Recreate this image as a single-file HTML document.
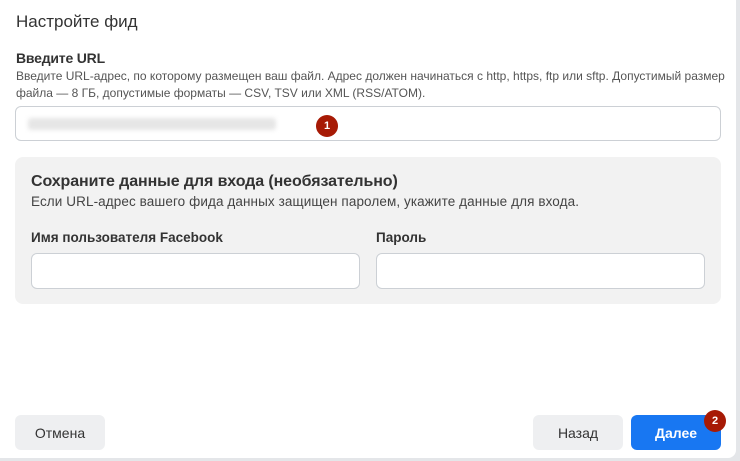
<!DOCTYPE html>
<html><head><meta charset="utf-8"><style>
body{margin:0;width:740px;height:461px;background:#e4e6e9;font-family:"Liberation Sans",sans-serif;color:#1c1e21;position:relative;overflow:hidden}
.card{position:absolute;left:0;top:0;width:736px;height:458px;background:#fff;border-bottom-right-radius:8px}
.a{position:absolute;white-space:nowrap}
.inp{position:absolute;background:#fff;border:1px solid #ccd0d5;border-radius:6px;box-sizing:border-box}
.btn{position:absolute;border-radius:6px;font-size:14px;display:flex;align-items:center;justify-content:center;height:35px;top:415px}
.badge{position:absolute;width:22px;height:22px;border-radius:50%;background:#a71a05;color:#fff;font-size:11px;font-weight:bold;display:flex;align-items:center;justify-content:center}
</style></head><body><div class="card">
<div class="a" style="left:16px;top:12px;font-size:17px;color:#333">Настройте фид</div>
<div class="a" style="left:16px;top:50px;font-size:14px;font-weight:bold;color:#333;letter-spacing:-0.2px">Введите URL</div>
<div class="a" style="left:16px;top:68px;font-size:12px;color:#555;line-height:17px">Введите URL-адрес, по которому размещен ваш файл. Адрес должен начинаться с http, https, ftp или sftp. Допустимый размер<br>файла — 8 ГБ, допустимые форматы — CSV, TSV или XML (RSS/ATOM).</div>
<div class="inp" style="left:15px;top:106px;width:706px;height:35px"></div>
<div class="a" style="left:28px;top:118px;width:248px;height:12px;background:#e6e6e6;filter:blur(2px);border-radius:3px"></div>
<div class="badge" style="left:316px;top:115px">1</div>
<div class="a" style="left:15px;top:157px;width:706px;height:147px;background:#f2f2f2;border-radius:8px"></div>
<div class="a" style="left:31px;top:173px;font-size:16px;font-weight:bold;color:#333;letter-spacing:-0.1px">Сохраните данные для входа (необязательно)</div>
<div class="a" style="left:31px;top:194px;font-size:13.5px;color:#444;letter-spacing:0.1px">Если URL-адрес вашего фида данных защищен паролем, укажите данные для входа.</div>
<div class="a" style="left:31px;top:230px;font-size:13.5px;font-weight:bold;color:#333">Имя пользователя Facebook</div>
<div class="a" style="left:376px;top:230px;font-size:13.5px;font-weight:bold;color:#333">Пароль</div>
<div class="inp" style="left:31px;top:253px;width:329px;height:36px"></div>
<div class="inp" style="left:376px;top:253px;width:329px;height:36px"></div>
<div class="btn" style="left:15px;width:90px;background:#eeeff1;color:#333">Отмена</div>
<div class="btn" style="left:533px;width:90px;background:#eeeff1;color:#333">Назад</div>
<div class="btn" style="left:631px;width:90px;background:#1877f2;color:#fff;font-weight:bold">Далее</div>
<div class="badge" style="left:704px;top:410px">2</div>
</div></body></html>
